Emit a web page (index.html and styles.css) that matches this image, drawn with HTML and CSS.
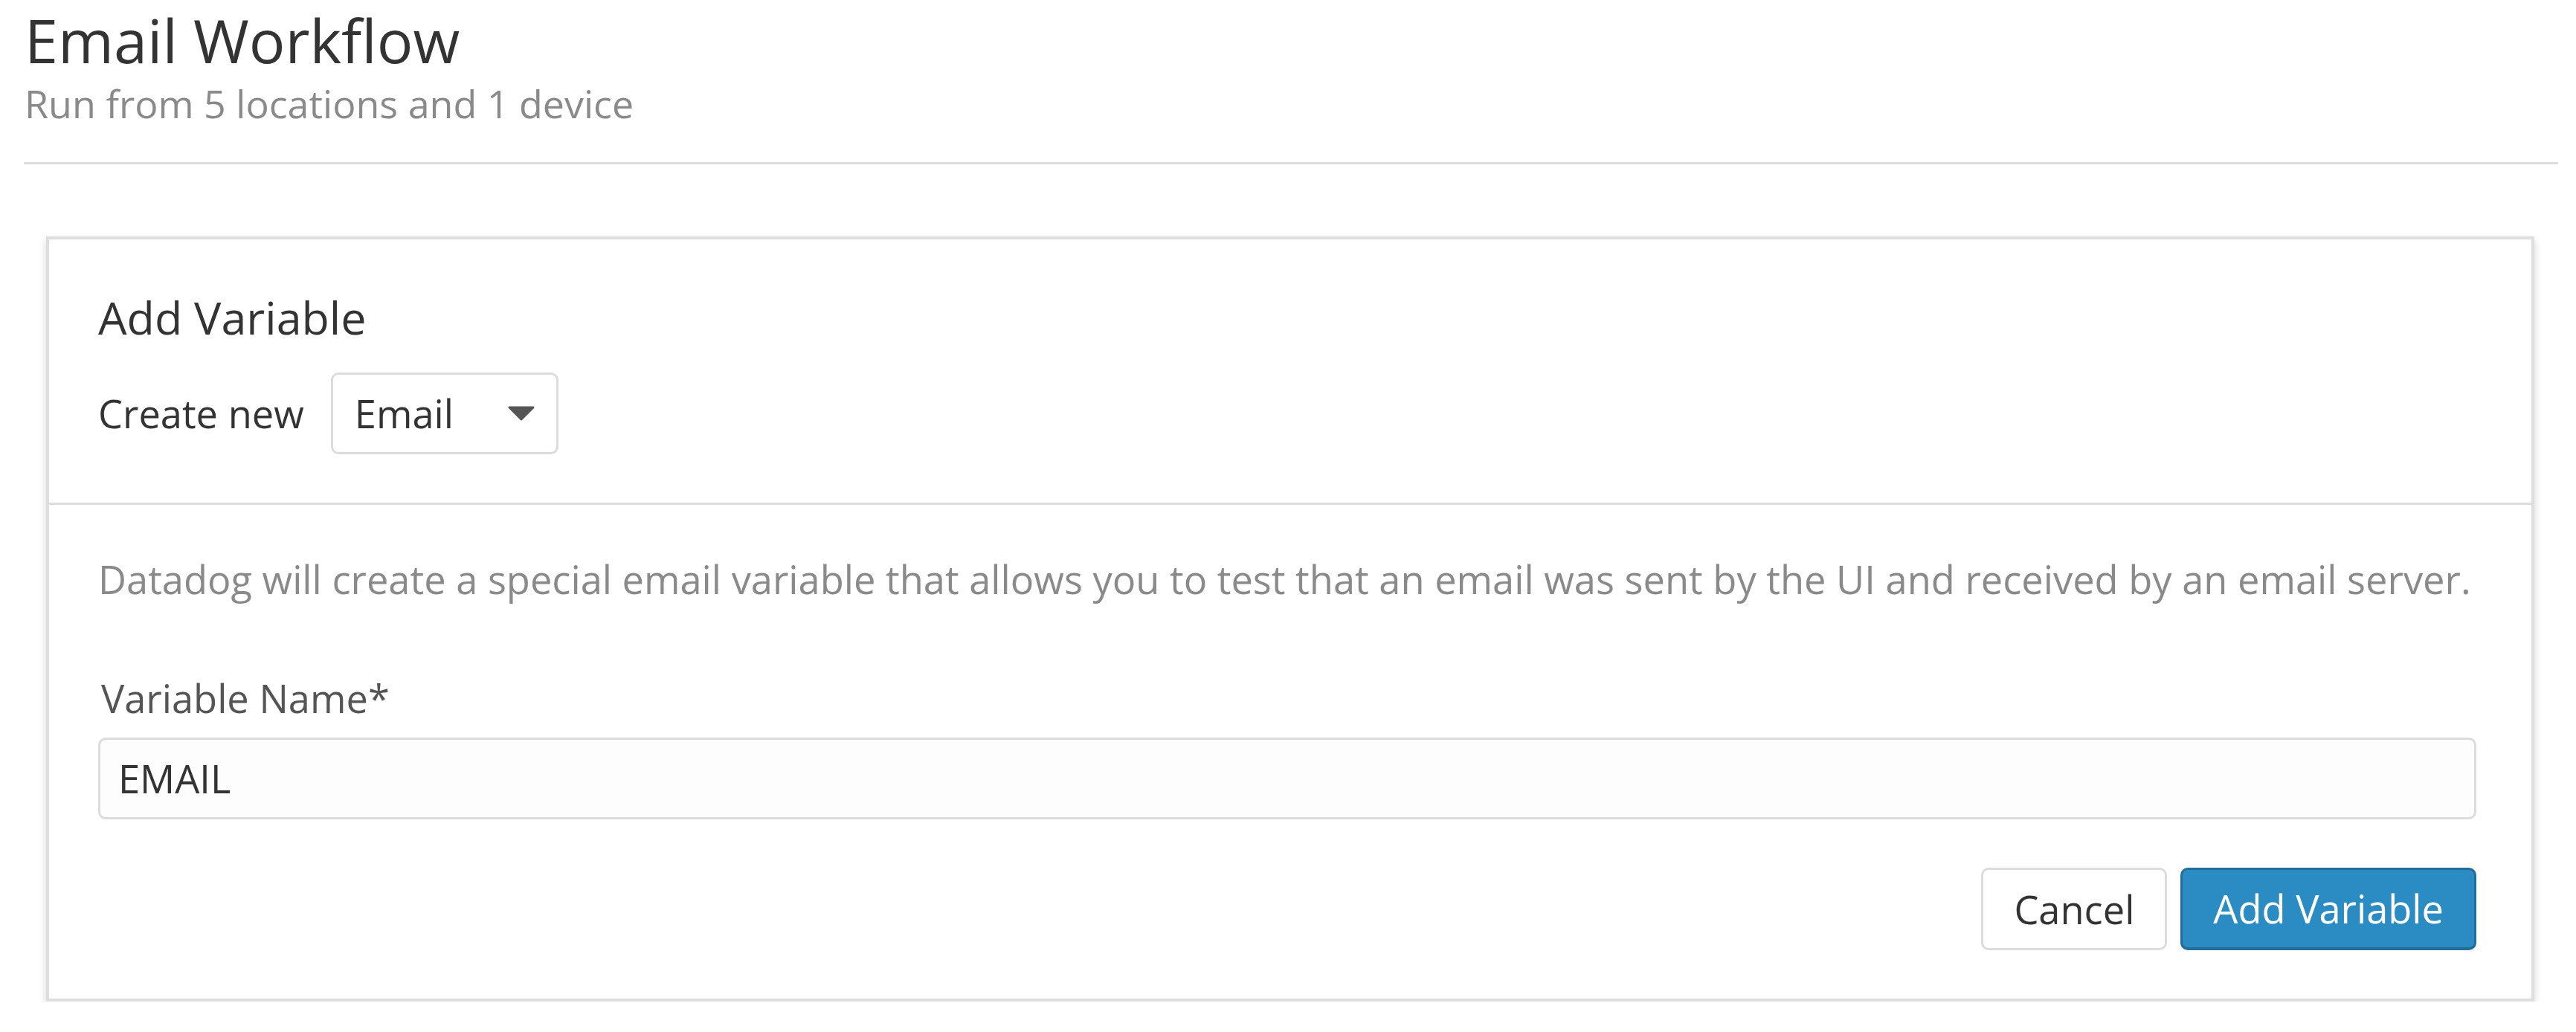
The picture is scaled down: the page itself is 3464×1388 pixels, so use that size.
FILE: index.html
```html
<!DOCTYPE html>
<html lang="en">
<head>
<meta charset="utf-8">
<title>Email Workflow</title>
<link rel="stylesheet" href="styles.css">
</head>
<body>
<div class="page">
  <header class="page-header">
    <h1 class="title">Email Workflow</h1>
    <p class="subtitle">Run from 5 locations and 1 device</p>
  </header>
  <hr class="rule">
  <section class="card">
    <div class="card-head">
      <h2 class="card-title">Add Variable</h2>
      <div class="create-row">
        <span class="create-label">Create new</span>
        <div class="select">
          <span class="select-value">Email</span>
          <svg class="caret" width="36" height="20" viewBox="0 0 36 20" aria-hidden="true">
            <polygon points="2,2 34,2 18,18" fill="#555" stroke="#555" stroke-width="3" stroke-linejoin="round"/>
          </svg>
        </div>
      </div>
    </div>
    <div class="card-body">
      <p class="desc">Datadog will create a special email variable that allows you to test that an email was sent by the UI and received by an email server.</p>
      <label class="field-label">Variable Name*</label>
      <div class="input">EMAIL</div>
      <div class="actions">
        <button class="btn btn-default">Cancel</button>
        <button class="btn btn-primary">Add Variable</button>
      </div>
    </div>
  </section>
</div>
</body>
</html>
```

FILE: styles.css
```css
* { box-sizing: border-box; }

html, body {
  margin: 0;
  padding: 0;
  background: #fff;
}

body {
  font-family: "Open Sans", "Noto Sans", sans-serif;
  color: #333;
}

.page {
  padding: 0 24px 0 29px;
}

.page-header {
  padding: 6px 0 0 4px;
}

.title {
  margin: 0;
  font-size: 81px;
  line-height: 95px;
  font-weight: 400;
  color: #333;
}

.subtitle {
  margin: 3px 0 0;
  font-size: 52px;
  line-height: 70px;
  color: #8a8a8a;
}

.rule {
  margin: 44px 0 0 3px;
  border: 0;
  height: 3px;
  background: #dcdcdc;
}

.card {
  margin: 97px 32px 0 33px;
  border: 4px solid #dedede;
  background: #fff;
  box-shadow: 0 5px 10px rgba(0, 0, 0, 0.17);
}

.card-head {
  padding: 65px 74px 65px 66px;
  border-bottom: 3px solid #dcdcdc;
}

.card-title {
  margin: 0;
  font-size: 61px;
  line-height: 80px;
  font-weight: 400;
  color: #333;
}

.create-row {
  margin-top: 34px;
  display: flex;
  align-items: center;
  gap: 36px;
}

.create-label {
  font-size: 52.4px;
  line-height: 70px;
  color: #333;
}

.select {
  width: 306px;
  height: 110px;
  border: 3px solid #dcdcdc;
  border-radius: 10px;
  padding: 0 29px;
  display: flex;
  align-items: center;
  justify-content: space-between;
  background: #fff;
}

.select-value {
  font-size: 52.4px;
  line-height: 70px;
  color: #333;
}

.caret {
  display: block;
}

.card-body {
  padding: 65px 74px 65px 66px;
}

.desc {
  margin: 0;
  font-size: 52.4px;
  line-height: 70px;
  color: #8a8a8a;
  white-space: nowrap;
}

.field-label {
  display: block;
  margin-top: 90px;
  padding-left: 4px;
  font-size: 52.4px;
  line-height: 70px;
  color: #555;
}

.input {
  margin-top: 18px;
  height: 110px;
  border: 3px solid #dcdcdc;
  border-radius: 10px;
  background: #fdfdfd;
  padding: 0 24px;
  display: flex;
  align-items: center;
  font-size: 52.4px;
  line-height: 70px;
  color: #333;
}

.actions {
  margin-top: 65px;
  display: flex;
  justify-content: flex-end;
  gap: 18px;
}

.btn {
  height: 111px;
  padding: 0 41px;
  border-radius: 10px;
  font-family: "Open Sans", "Noto Sans", sans-serif;
  font-size: 52.4px;
  line-height: 70px;
  cursor: pointer;
}

.btn-default {
  background: #fff;
  border: 3px solid #dcdcdc;
  color: #333;
}

.btn-primary {
  background: #2b8cc4;
  border: 3px solid #236d9b;
  border-bottom-width: 4px;
  color: #fff;
}
```
